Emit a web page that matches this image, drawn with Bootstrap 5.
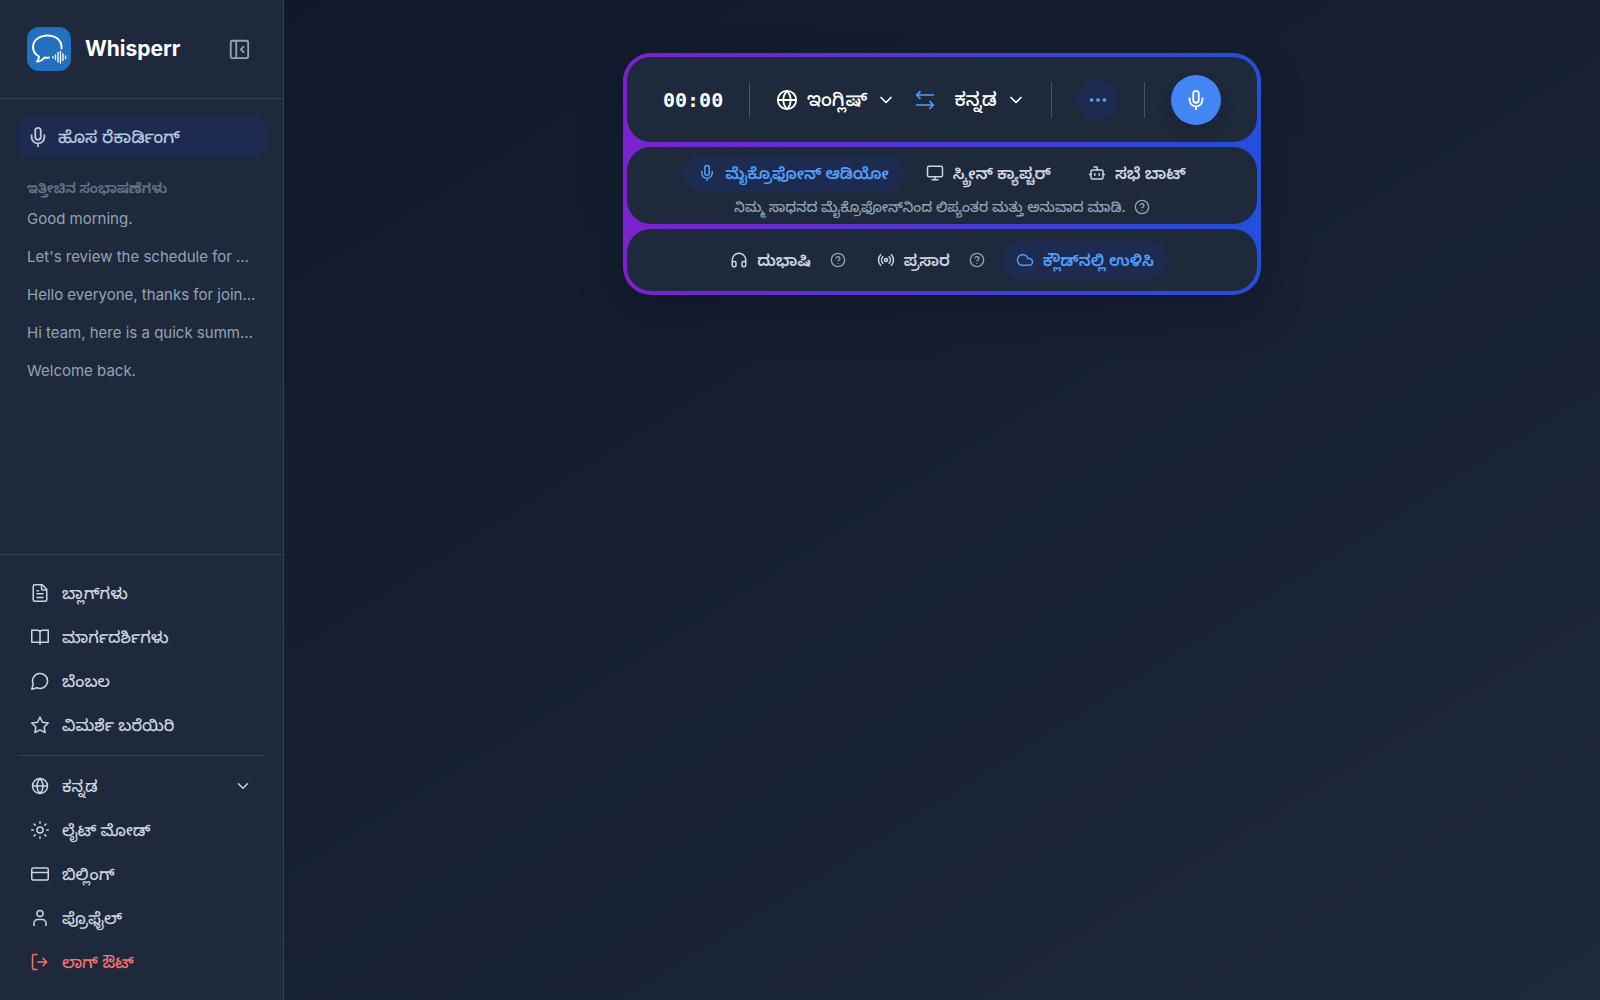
<!DOCTYPE html>
<html lang="kn" data-bs-theme="dark">
<head>
<meta charset="utf-8">
<meta name="viewport" content="width=device-width, initial-scale=1">
<title>Whisperr</title>
<link href="https://cdn.jsdelivr.net/npm/bootstrap@5.3.0/dist/css/bootstrap.min.css" rel="stylesheet">
<style>
  body { font-family: Inter, "Noto Sans Kannada", "Noto Sans", sans-serif; font-size: 16px; line-height: 24px; color: #cbd5e1; background: linear-gradient(to bottom right, #0f172a, #1e293b); }
  svg { fill: none; stroke: currentColor; stroke-width: 2; stroke-linecap: round; stroke-linejoin: round; flex: none; }
  .ic-16 { width: 16px; height: 16px; }
  .ic-18 { width: 18px; height: 18px; }
  .ic-20 { width: 20px; height: 20px; }
  .ic-22 { width: 22px; height: 22px; }
  button, a { white-space: nowrap; }
  .plain { background: none; border: 0; padding: 0; color: inherit; }
  .side { width: 284px; background: #1e293b; border-right: 1px solid #334155; }
  .side-head { height: 99px; padding: 0 33px 0 27px; border-bottom: 1px solid #334155; }
  .brand-tile { width: 44px; height: 44px; border-radius: 12px; background: #2470c0; color: #fff; }
  .brand-name { font-size: 21px; font-weight: 700; color: #fff; margin-left: 14px; }
  .talks { padding: 18px; min-height: 0; }
  .new-rec { height: 40px; border-radius: 9px; background: #1e2b50; color: #b9c7e2; font-size: 17px; font-weight: 500; padding: 0 9px; gap: 9px; }
  .side-title { font-size: 14px; line-height: 20px; font-weight: 600; color: #64748b; margin: 21px 9px 2px; }
  .talk { height: 38px; line-height: 38px; font-size: 15px; padding: 0 9px; color: #94a3b8; text-decoration: none; }
  .side-foot { border-top: 1px solid #334155; padding: 16px 18px; }
  .side-link { height: 44px; padding: 0 13px; gap: 13px; color: #cbd5e1; font-weight: 500; text-decoration: none; width: 100%; }
  .side-link-out { color: #f87171; }
  .side-rule { height: 1px; background: #334155; margin: 8px 0; }
  .frame { width: 638px; margin-top: 53px; padding: 4px; gap: 5px; border-radius: 28px; background: linear-gradient(to right, #7b22ce, #234fdb); box-shadow: 0 20px 40px rgba(8, 13, 30, .35); }
  .panel { background: #1e293b; border-radius: 24px; }
  .panel-top { height: 85px; padding: 0 36px; }
  .panel-mid { height: 77px; padding-top: 8px; }
  .panel-low { height: 62px; }
  .clock { font-family: "DejaVu Sans Mono", monospace; font-size: 20px; font-weight: 700; color: #fff; }
  .bar { width: 1px; height: 36px; background: #475569; }
  .langs { gap: 19px; }
  .lang { font-size: 19px; font-weight: 500; color: #fff; gap: 9px; }
  .swap { color: #519ffa; }
  .sources { gap: 7px; }
  .pill { height: 36px; border-radius: 18px; padding: 0 15px; gap: 9px; font-weight: 600; color: #cbd5e1; background: none; border: 0; }
  .pill-on { background: #1e2b50; color: #519ffa; }
  .more { width: 40px; height: 40px; border-radius: 50%; border: 0; background: #1e2b50; color: #60a5fa; }
  .rec { width: 50px; height: 50px; border-radius: 50%; border: 0; background: #4285f4; color: #fff; box-shadow: 0 8px 14px rgba(15, 23, 42, .25); }
  .hint { font-size: 14px; line-height: 20px; font-weight: 500; color: #94a3b8; gap: 8px; margin-top: 6px; }
  .muted { color: #94a3b8; }
</style>
</head>
<body>
<svg class="d-none">
  <symbol id="mic" viewBox="0 0 24 24"><path d="M12 19v3M19 10v2a7 7 0 0 1-14 0v-2"/><rect x="9" y="2" width="6" height="13" rx="3"/></symbol>
  <symbol id="globe" viewBox="0 0 24 24"><circle cx="12" cy="12" r="10"/><path d="M12 2a14.5 14.5 0 0 0 0 20 14.5 14.5 0 0 0 0-20M2 12h20"/></symbol>
  <symbol id="down" viewBox="0 0 24 24"><path d="m6 9 6 6 6-6"/></symbol>
  <symbol id="help" viewBox="0 0 24 24"><circle cx="12" cy="12" r="10"/><path d="M9.1 9a3 3 0 0 1 5.8 1c0 2-3 3-3 3M12 17h.01"/></symbol>
</svg>
<div class="d-flex min-vh-100">
  <aside class="side d-flex flex-column flex-shrink-0">
    <div class="side-head d-flex align-items-center">
      <span class="brand-tile d-flex">
        <svg width="44" height="44" viewBox="0 0 44 44"><path d="M34.500 21.500C35 13 28.500 8.500 20.500 8.500S6 13.500 6 20c0 4.500 2.500 7.500 6 9.500 0 2-.8 3.500-2 5 3 .2 5.500-1.500 7.500-4 1.500.3 3 .3 4.500 0" stroke-width="2"/><path d="M26 29.500v1.500M28.500 28v4.500M31 25.500v9.500M33.500 24.500v11.500M36 27v6.500M38.500 29v2.500" stroke-width="1.300"/></svg>
      </span>
      <span class="brand-name">Whisperr</span>
      <button class="plain ms-auto d-flex muted" aria-label="Collapse sidebar"><svg class="ic-22" viewBox="0 0 24 24"><rect x="3" y="3" width="19" height="19" rx="2"/><path d="M9 3v19M17 15.500l-3-3 3-3"/></svg></button>
    </div>
    <div class="talks d-flex flex-column flex-grow-1">
      <button class="new-rec border-0 d-flex align-items-center"><svg class="ic-22"><use href="#mic"/></svg>ಹೊಸ ರೆಕಾರ್ಡಿಂಗ್</button>
      <div class="side-title">ಇತ್ತೀಚಿನ ಸಂಭಾಷಣೆಗಳು</div>
      <a class="talk" href="#">Good morning.</a>
      <a class="talk" href="#">Let's review the schedule for …</a>
      <a class="talk" href="#">Hello everyone, thanks for join…</a>
      <a class="talk" href="#">Hi team, here is a quick summ…</a>
      <a class="talk" href="#">Welcome back.</a>
    </div>
    <nav class="side-foot">
      <a class="side-link d-flex align-items-center" href="#"><svg class="ic-18" viewBox="0 0 24 24"><path d="M15 1H5a2 2 0 0 0-2 2v18a2 2 0 0 0 2 2h14a2 2 0 0 0 2-2V7ZM14 1v5a2 2 0 0 0 2 2h5M10 9H8M16 13H8M16 18H8"/></svg>ಬ್ಲಾಗ್‌ಗಳು</a>
      <a class="side-link d-flex align-items-center" href="#"><svg class="ic-18" viewBox="0 0 24 24"><path d="M12 6v16M12 19H1V3h8a3 3 0 0 1 3 3 3 3 0 0 1 3-3h8v16H12"/></svg>ಮಾರ್ಗದರ್ಶಿಗಳು</a>
      <a class="side-link d-flex align-items-center" href="#"><svg class="ic-18" viewBox="0 0 24 24"><path d="M7.900 21A10 10 0 1 0 3 16.100L1 23Z"/></svg>ಬೆಂಬಲ</a>
      <a class="side-link d-flex align-items-center" href="#"><svg class="ic-18" viewBox="0 0 24 24"><path d="m12 1.500 3.300 6.800 7.700 1-5.500 5.300 1.300 7.400-6.800-3.500-6.800 3.500 1.300-7.400L1 9.300l7.700-1z"/></svg>ವಿಮರ್ಶೆ ಬರೆಯಿರಿ</a>
      <div class="side-rule"></div>
      <button class="side-link border-0 bg-transparent d-flex align-items-center"><svg class="ic-18"><use href="#globe"/></svg>ಕನ್ನಡ<svg class="ic-18 ms-auto"><use href="#down"/></svg></button>
      <button class="side-link border-0 bg-transparent d-flex align-items-center"><svg class="ic-18" viewBox="0 0 24 24"><circle cx="12" cy="12" r="4"/><path d="M12 1v2M12 21v2M4.200 4.200l1.500 1.500M18.300 18.300l1.500 1.500M1 12h2M21 12h2M5.700 18.300l-1.500 1.500M19.800 4.200l-1.500 1.500"/></svg>ಲೈಟ್ ಮೋಡ್</button>
      <a class="side-link d-flex align-items-center" href="#"><svg class="ic-18" viewBox="0 0 24 24"><rect x="1" y="4" width="22" height="16" rx="2"/><path d="M1 10h22"/></svg>ಬಿಲ್ಲಿಂಗ್</a>
      <a class="side-link d-flex align-items-center" href="#"><svg class="ic-18" viewBox="0 0 24 24"><path d="M20 22v-3a5 5 0 0 0-5-5H9a5 5 0 0 0-5 5v3"/><circle cx="12" cy="6" r="4"/></svg>ಪ್ರೊಫೈಲ್</a>
      <button class="side-link side-link-out border-0 bg-transparent d-flex align-items-center"><svg class="ic-18" viewBox="0 0 24 24"><path d="M8 22H4a2 2 0 0 1-2-2V4a2 2 0 0 1 2-2h4M16 17l5-5-5-5M21 12H9"/></svg>ಲಾಗ್ ಔಟ್</button>
    </nav>
  </aside>
  <main class="flex-grow-1 d-flex justify-content-center align-items-start">
    <div class="frame d-flex flex-column">
      <div class="panel panel-top d-flex align-items-center justify-content-between">
        <span class="clock">00:00</span>
        <span class="bar"></span>
        <div class="langs d-flex align-items-center">
          <button class="plain lang d-flex align-items-center"><svg class="ic-22"><use href="#globe"/></svg>ಇಂಗ್ಲಿಷ್<svg class="ic-20"><use href="#down"/></svg></button>
          <button class="plain swap d-flex" aria-label="Swap languages"><svg class="ic-20" viewBox="0 0 24 24"><path d="M6 2 2 6l4 4M2 6h20M18 14l4 4-4 4M22 18H2"/></svg></button>
          <button class="plain lang d-flex align-items-center">ಕನ್ನಡ<svg class="ic-20"><use href="#down"/></svg></button>
        </div>
        <span class="bar"></span>
        <button class="more d-flex align-items-center justify-content-center" aria-label="More"><svg class="ic-22" viewBox="0 0 24 24" fill="currentColor"><circle cx="12" cy="12" r="1"/><circle cx="19" cy="12" r="1"/><circle cx="5" cy="12" r="1"/></svg></button>
        <span class="bar"></span>
        <button class="rec d-flex align-items-center justify-content-center" aria-label="Record"><svg class="ic-22"><use href="#mic"/></svg></button>
      </div>
      <div class="panel panel-mid">
        <div class="sources d-flex justify-content-center">
          <button class="pill pill-on d-flex align-items-center"><svg class="ic-18"><use href="#mic"/></svg>ಮೈಕ್ರೊಫೋನ್ ಆಡಿಯೋ</button>
          <button class="pill d-flex align-items-center"><svg class="ic-18" viewBox="0 0 24 24"><rect x="2" y="3" width="20" height="14" rx="2"/><path d="M8 21h8M12 17v4"/></svg>ಸ್ಕ್ರೀನ್ ಕ್ಯಾಪ್ಚರ್</button>
          <button class="pill d-flex align-items-center"><svg class="ic-18" viewBox="0 0 24 24"><path d="M12 8V4H8M2 14h2M20 14h2M15 13v2M9 13v2"/><rect x="4" y="8" width="16" height="12" rx="2"/></svg>ಸಭೆ ಬಾಟ್</button>
        </div>
        <div class="hint d-flex align-items-center justify-content-center">ನಿಮ್ಮ ಸಾಧನದ ಮೈಕ್ರೊಫೋನ್‌ನಿಂದ ಲಿಪ್ಯಂತರ ಮತ್ತು ಅನುವಾದ ಮಾಡಿ.<svg class="ic-16"><use href="#help"/></svg></div>
      </div>
      <div class="panel panel-low d-flex align-items-center justify-content-center">
        <button class="pill d-flex align-items-center"><svg class="ic-18" viewBox="0 0 24 24"><path d="M3 14h3a2 2 0 0 1 2 2v3a2 2 0 0 1-2 2H5a2 2 0 0 1-2-2v-7a9 9 0 0 1 18 0v7a2 2 0 0 1-2 2h-1a2 2 0 0 1-2-2v-3a2 2 0 0 1 2-2h3"/></svg>ದುಭಾಷಿ</button>
        <svg class="ic-16 muted ms-1 me-3"><use href="#help"/></svg>
        <button class="pill d-flex align-items-center"><svg class="ic-18" viewBox="0 0 24 24"><path d="M4.900 19.100C1 15.200 1 8.800 4.900 4.900M7.800 16.200c-2.300-2.300-2.300-6.100 0-8.500M16.200 7.800c2.300 2.300 2.300 6.100 0 8.500M19.100 4.900C23 8.800 23 15.100 19.100 19"/><circle cx="12" cy="12" r="2"/></svg>ಪ್ರಸಾರ</button>
        <svg class="ic-16 muted ms-1 me-3"><use href="#help"/></svg>
        <button class="pill pill-on d-flex align-items-center"><svg class="ic-18" viewBox="0 0 24 24"><path d="M17.500 19H9a7 7 0 1 1 6.710-9h1.790a4.500 4.500 0 1 1 0 9Z"/></svg>ಕ್ಲೌಡ್‌ನಲ್ಲಿ ಉಳಿಸಿ</button>
      </div>
    </div>
  </main>
</div>
<script src="https://cdn.jsdelivr.net/npm/bootstrap@5.3.0/dist/js/bootstrap.bundle.min.js"></script>
</body>
</html>
